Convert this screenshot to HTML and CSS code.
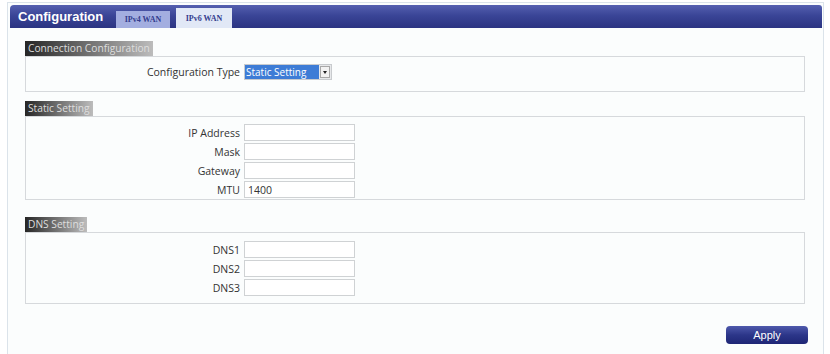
FILE: index.html
```html
<!DOCTYPE html>
<html lang="en">
<head>
    <meta charset="UTF-8">
    <title>Configuration</title>
    <link rel="stylesheet" href="styles.css">
</head>
<body>
    <div class="panel">
        <div class="topbar">
            <span class="title">Configuration</span>
            <span class="tab">IPv4 WAN</span>
            <span class="tab tab-active">IPv6 WAN</span>
        </div>

        <div class="section first">
            <div class="legend">Connection Configuration</div>
            <div class="box box-conn">
                <div class="row">
                    <label>Configuration Type</label>
                    <span class="select"><span class="sel-text">Static Setting</span><span class="sel-btn"></span></span>
                </div>
            </div>
        </div>

        <div class="section">
            <div class="legend">Static Setting</div>
            <div class="box box-static">
                <div class="row"><label>IP Address</label><input type="text"></div>
                <div class="row"><label>Mask</label><input type="text"></div>
                <div class="row"><label>Gateway</label><input type="text"></div>
                <div class="row"><label>MTU</label><input type="text" value="1400"></div>
            </div>
        </div>

        <div class="section dns">
            <div class="legend">DNS Setting</div>
            <div class="box box-dns">
                <div class="row"><label>DNS1</label><input type="text"></div>
                <div class="row"><label>DNS2</label><input type="text"></div>
                <div class="row"><label>DNS3</label><input type="text"></div>
            </div>
        </div>

        <div class="actions">
            <button class="apply">Apply</button>
        </div>
    </div>
</body>
</html>
```
FILE: styles.css
```css
html, body {
    overflow: hidden;
}
body {
    margin: 0;
    background-color: #ffffff;
    font-family: "Open Sans", "DejaVu Sans", Arial, sans-serif;
    color: #333;
}
.panel {
    box-sizing: border-box;
    margin: 2px 6px 0 7px;
    padding: 2px 1px 0 2px;
    height: 352px;
    background-color: #fbfdfd;
    border: 1px solid #dbe3ea;
    border-bottom: none;
}
.topbar {
    display: flex;
    align-items: flex-end;
    height: 23px;
    background: linear-gradient(#5560b0, #3a4597 45%, #2b3482);
    border-radius: 4px 3px 0 0;
}
.title {
    font-family: "Liberation Sans", Arial, sans-serif;
    font-weight: bold;
    font-size: 13px;
    color: #fff;
    align-self: center;
    margin: 0 16px 0 8px;
    width: 82px;
}
.tab {
    font-family: "Liberation Serif", "Times New Roman", serif;
    font-weight: bold;
    font-size: 8px;
    color: #333d8e;
    background-color: #a3aee0;
    width: 54px;
    height: 17px;
    line-height: 17px;
    text-align: center;
    margin-right: 6px;
}
.tab-active {
    background-color: #e1e8f6;
    height: 20px;
    line-height: 21px;
    width: 56px;
}
.section {
    margin: 9px 17px 0 15px;
}
.section.first {
    margin-top: 13px;
}
.section.dns {
    margin-top: 17px;
}
.legend {
    width: fit-content;
    height: 15px;
    line-height: 15px;
    padding: 0 3px;
    font-size: 10.2px;
    color: #dedede;
    background: linear-gradient(to right, #262626, #6a6a6a 45%, #bcbcbc);
}
.box {
    border: 1px solid #d6d9dc;
}
.box-conn {
    padding: 5px 0 10px 0;
}
.box-static {
    padding: 6px 0 0 0;
}
.box-dns {
    padding: 7px 0 6px 0;
}
.row {
    display: flex;
    align-items: center;
    height: 19px;
    font-size: 10.5px;
}
.row label {
    width: 214px;
    text-align: right;
    padding-right: 4px;
}
.row input {
    box-sizing: border-box;
    width: 111px;
    height: 17px;
    margin: 0;
    padding: 0 3px;
    border: 1px solid #cfd2d4;
    background: #fff;
    font-family: "Open Sans", "DejaVu Sans", Arial, sans-serif;
    font-size: 10.5px;
    color: #333;
}
.select {
    display: flex;
    align-items: center;
    height: 14px;
    border: 1px solid #c8cbce;
    background: #e6e8ea;
}
.sel-text {
    background-color: #3d7cd6;
    color: #fff;
    font-size: 10px;
    line-height: 14px;
    padding: 0 1px;
    width: 72px;
    white-space: nowrap;
    overflow: hidden;
}
.sel-btn {
    width: 10px;
    height: 12px;
    margin: 0 1px;
    background: #f2f2f2;
    border: 1px solid #a8a8a8;
    box-sizing: border-box;
    position: relative;
}
.sel-btn::after {
    content: "";
    position: absolute;
    left: 2px;
    top: 4px;
    border-left: 2px solid transparent;
    border-right: 2px solid transparent;
    border-top: 3px solid #222;
}
.actions {
    display: flex;
    justify-content: flex-end;
    margin: 22px 14px 0 0;
}
.apply {
    width: 82px;
    height: 18px;
    border: none;
    border-radius: 4px;
    background: linear-gradient(#4e59ac, #2c3689 50%, #1e2675);
    color: #fff;
    font-family: "Liberation Sans", Arial, sans-serif;
    font-size: 11px;
    padding: 0;
    cursor: pointer;
}
```
